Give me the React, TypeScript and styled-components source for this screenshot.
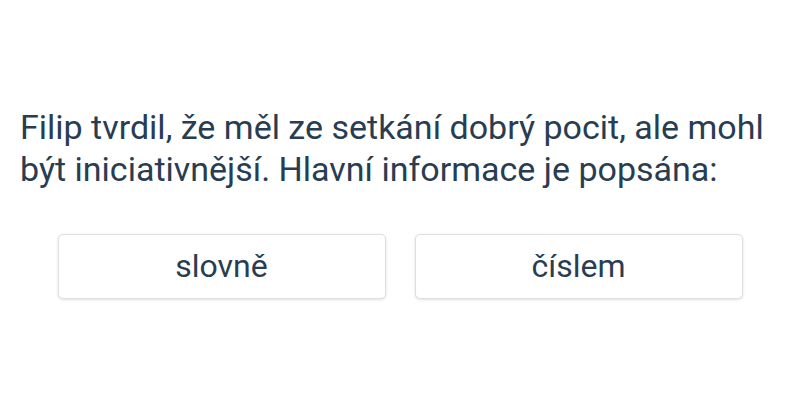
import styled, { createGlobalStyle } from 'styled-components';

const Global = createGlobalStyle`
  body {
    margin: 0;
    background: #fff;
    font-family: Roboto, "Noto Sans", sans-serif;
  }
`;

const Page = styled.div`
  width: 800px;
  height: 400px;
  box-sizing: border-box;
  padding: 106px 20px 0;
`;

const Question = styled.p`
  margin: 0;
  font-size: 34px;
  line-height: 42px;
  color: #283d52;
`;

const Options = styled.div`
  display: flex;
  justify-content: center;
  gap: 29px;
  margin-top: 44px;
`;

const Option = styled.button`
  width: 328px;
  height: 65px;
  padding: 0 0 2px;
  background: #fff;
  border: 1px solid #dcdfe3;
  border-radius: 5px;
  box-shadow: 0 1px 3px rgba(0, 0, 0, 0.12);
  font-family: Roboto, "Noto Sans", sans-serif;
  font-size: 32px;
  color: #283d52;
  cursor: pointer;
`;

export default function App() {
  return (
    <Page>
      <Global />
      <Question>
        Filip tvrdil, že měl ze setkání dobrý pocit, ale mohl být iniciativnější. Hlavní informace je popsána:
      </Question>
      <Options>
        <Option>slovně</Option>
        <Option>číslem</Option>
      </Options>
    </Page>
  );
}
